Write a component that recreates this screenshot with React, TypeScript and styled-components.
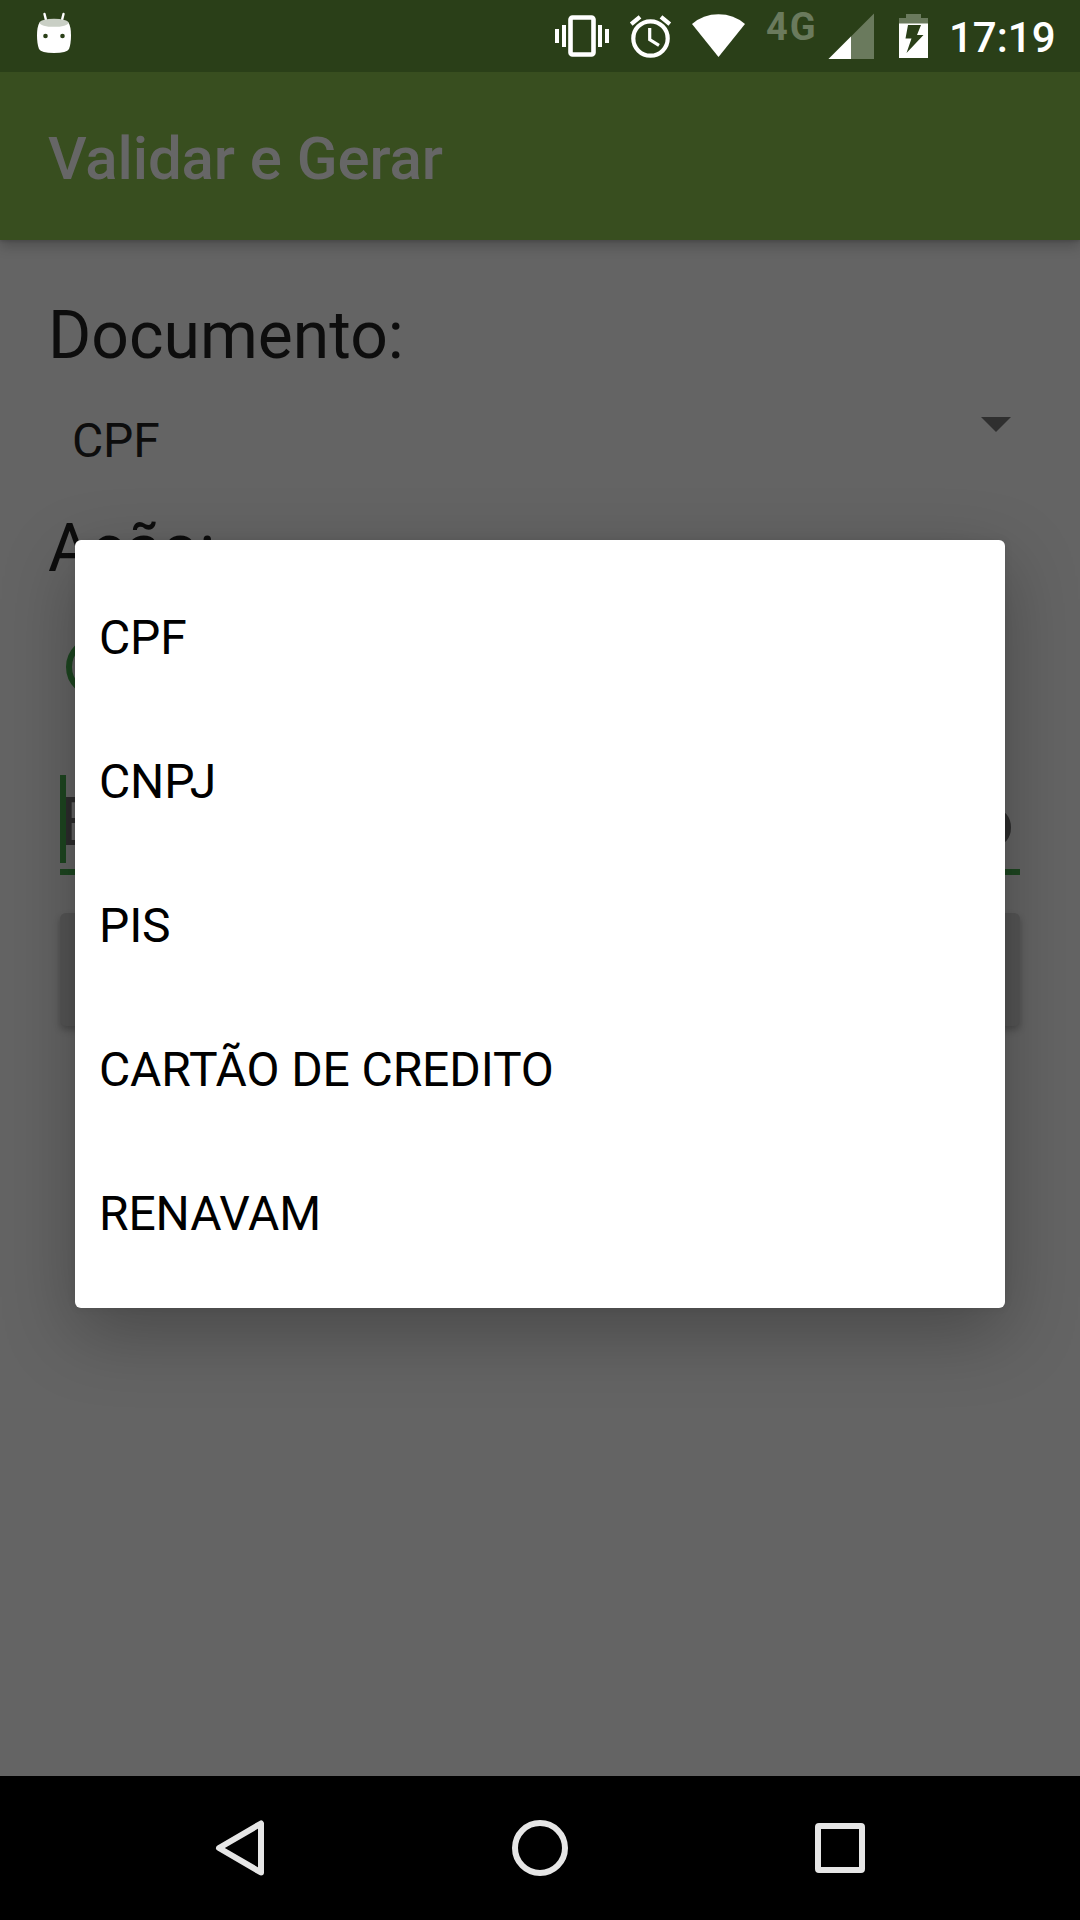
import React from "react";
import styled, { createGlobalStyle } from "styled-components";

const GlobalStyle = createGlobalStyle`
  * { box-sizing: border-box; }
  body { margin: 0; background: #646464; }
`;

const Screen = styled.div`
  position: relative;
  display: flex;
  flex-direction: column;
  width: 1080px;
  height: 1920px;
  overflow: hidden;
  background: #646464;
  font-family: Roboto, "Noto Sans", sans-serif;
  color: #0d0d0d;
`;

const StatusBar = styled.header`
  z-index: 2;
  display: flex;
  justify-content: space-between;
  height: 72px;
  flex: none;
  padding: 0 26px 0 34px;
  background: #2a3f18;
  color: #fff;
`;

const StatusGroup = styled.div`
  display: flex;
`;

const Glyph = styled.svg<{ $gap?: number }>`
  display: block;
  flex: none;
  margin-right: ${(p) => p.$gap ?? 0}px;
`;

const Network = styled.span`
  width: 51px;
  margin-left: -1px;
  margin-right: 11px;
  padding-top: 5px;
  font-size: 38px;
  font-weight: 700;
  line-height: 44px;
  letter-spacing: 2px;
  color: #6a7a5d;
`;

const Clock = styled.span`
  width: 105px;
  font-size: 42px;
  font-weight: 500;
  line-height: 76px;
  white-space: nowrap;
`;

const Toolbar = styled.div`
  z-index: 1;
  display: flex;
  align-items: center;
  flex: none;
  height: 168px;
  padding: 5px 48px 0;
  background: #384e1f;
  box-shadow: 0 6px 12px rgba(0, 0, 0, 0.22), 0 1px 3px rgba(0, 0, 0, 0.15);
`;

const Title = styled.h1`
  margin: 0;
  font-size: 60px;
  font-weight: 500;
  line-height: 70px;
  letter-spacing: -0.1px;
  color: #666;
`;

const Form = styled.main`
  display: flex;
  flex-direction: column;
  flex: 1;
  padding: 48px 48px 0;
`;

const Label = styled.div`
  height: 93px;
  font-size: 66px;
  line-height: 95px;
`;

const Spinner = styled.div`
  display: flex;
  justify-content: space-between;
  height: 120px;
  padding: 0 21px 0 24px;
  font-size: 48px;
  line-height: 119px;
  letter-spacing: -0.12px;
`;

const Arrow = styled.i`
  margin-top: 36px;
  width: 0;
  height: 0;
  border: 15px solid transparent;
  border-top-color: #2f2f2f;
  border-bottom: 0;
`;

const RadioRow = styled.div`
  display: flex;
  align-items: center;
  height: 96px;
  margin-top: 25px;
  padding-left: 18px;
`;

const Radio = styled.span`
  width: 60px;
  height: 60px;
  border: 6px solid #1d4620;
  border-radius: 50%;
`;

const Field = styled.div`
  display: flex;
  justify-content: space-between;
  height: 100px;
  margin: 60px 12px 0;
  padding-right: 6px;
  border-bottom: 6px solid #1d4620;
  font-size: 66px;
  line-height: 95px;
  color: #2d2d2d;
`;

const Caret = styled.span`
  z-index: 1;
  width: 6px;
  height: 88px;
  margin-right: -6px;
  background: #1d4620;
`;

const Hint = styled.span`
  display: flex;
  flex: 1;
  justify-content: space-between;
`;

const Button = styled.div`
  height: 113px;
  margin: 38px 12px 0;
  border-radius: 6px;
  background: #555;
  box-shadow: 0 4px 7px rgba(0, 0, 0, 0.25);
`;

const Popup = styled.ul`
  position: absolute;
  z-index: 3;
  left: 75px;
  top: 540px;
  width: 930px;
  margin: 0;
  padding: 24px 0;
  list-style: none;
  border-radius: 6px;
  background: #fff;
  box-shadow: 0 24px 72px rgba(0, 0, 0, 0.28), 0 0 8px rgba(0, 0, 0, 0.08);
`;

const Option = styled.li`
  height: 144px;
  padding: 0 24px;
  font-size: 48px;
  line-height: 147px;
  letter-spacing: -0.12px;
  color: #000;
`;

const NavBar = styled.nav`
  display: flex;
  align-items: center;
  justify-content: center;
  gap: 236px;
  flex: none;
  height: 144px;
  background: #000;
`;

const OPTIONS = ["CPF", "CNPJ", "PIS", "CARTÃO DE CREDITO", "RENAVAM"];
const DIM = "#6a7a5d";
const BAR = "#2a3f18";

const Robot = () => (
  <Glyph width="40" height="72" viewBox="34 0 40 72">
    <path d="M44.5 14 46.5 22M63.5 14 61.5 22" stroke="#fff" strokeWidth="2.4" strokeLinecap="round" />
    <path d="M39.5 22.5Q54 18 68.500 22.500Q71 27 71 35Q71 44 69 49Q67 53 54 53Q41 53 39 49Q37 44 37 35Q37 27 39.500 22.500Z" fill="#fff" />
    <ellipse cx="54" cy="22.800" rx="14.500" ry="4" fill="#c9cfc5" />
    <circle cx="45.500" cy="36" r="2.300" fill={BAR} />
    <circle cx="62.500" cy="36" r="2.300" fill={BAR} />
  </Glyph>
);

const Vibrate = () => (
  <Glyph width="54" height="72" viewBox="555 0 54 72" $gap={20}>
    <rect x="570.500" y="17.500" width="23" height="37" rx="2" fill="none" stroke="#fff" strokeWidth="4.600" />
    <path d="M555 29h4v14h-4zM562 25h4v22h-4zM598 25h4v22h-4zM605 29h4v14h-4z" fill="#fff" />
  </Glyph>
);

const Alarm = () => (
  <Glyph width="43" height="72" viewBox="629 0 43 72" $gap={20}>
    <g fill="none" stroke="#fff">
      <circle cx="650.500" cy="38.500" r="17.200" strokeWidth="4.200" />
      <path d="M631.200 24.200 640 16.800M661 16.800 669.800 24.200" strokeWidth="4.200" />
      <path d="M649.700 28V39.700L659 45.300" strokeWidth="3.200" />
    </g>
  </Glyph>
);

const Wifi = () => (
  <Glyph width="53" height="72" viewBox="692 0 53 72" $gap={22}>
    <path d="M692 24Q703 14.200 718.500 14.200T745 24L718.500 57Z" fill="#fff" />
  </Glyph>
);

const Signal = () => (
  <Glyph width="46" height="72" viewBox="828 0 46 72" $gap={25}>
    <path d="M828.500 59 874 13.500V59Z" fill={DIM} />
    <path d="M828.500 59 851 36.500V59Z" fill="#fff" />
  </Glyph>
);

const Battery = () => (
  <Glyph width="29" height="72" viewBox="899 0 29 72" $gap={21}>
    <path d="M899 24V18h7V14h15v4h7v6Z" fill={DIM} />
    <path d="M899 23.500h29V58h-29z" fill="#fff" />
    <path d="M908 25h13l-4 10h6.500L906.500 53l5-14.500h-6Z" fill={BAR} />
  </Glyph>
);

export default function App() {
  return (
    <>
      <GlobalStyle />
      <Screen>
        <StatusBar>
          <Robot />
          <StatusGroup>
            <Vibrate />
            <Alarm />
            <Wifi />
            <Network>4G</Network>
            <Signal />
            <Battery />
            <Clock>17:19</Clock>
          </StatusGroup>
        </StatusBar>
        <Toolbar>
          <Title>Validar e Gerar</Title>
        </Toolbar>
        <Form>
          <Label>Documento:</Label>
          <Spinner>
            CPF
            <Arrow />
          </Spinner>
          <Label>Ação:</Label>
          <RadioRow>
            <Radio />
          </RadioRow>
          <Field>
            <Caret />
            <Hint>
              <span>E</span>
              <span>o</span>
            </Hint>
          </Field>
          <Button />
        </Form>
        <NavBar>
          <Glyph width="64" height="64" viewBox="208 1816 64 64">
            <path d="M261 1823.500V1872.500L219 1848Z" fill="none" stroke="#e6e6e6" strokeWidth="6" strokeLinejoin="round" />
          </Glyph>
          <Glyph width="64" height="64" viewBox="508 1816 64 64">
            <circle cx="540" cy="1848" r="25" fill="none" stroke="#e6e6e6" strokeWidth="6" />
          </Glyph>
          <Glyph width="64" height="64" viewBox="808 1816 64 64">
            <rect x="818" y="1826" width="44" height="44" rx="1" fill="none" stroke="#e6e6e6" strokeWidth="6" />
          </Glyph>
        </NavBar>
        <Popup>
          {OPTIONS.map((o) => (
            <Option key={o}>{o}</Option>
          ))}
        </Popup>
      </Screen>
    </>
  );
}
